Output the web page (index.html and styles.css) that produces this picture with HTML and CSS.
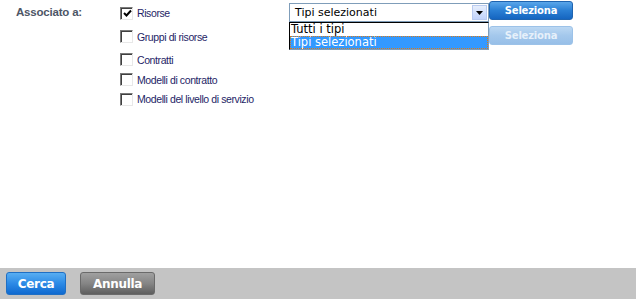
FILE: index.html
```html
<!DOCTYPE html>
<html lang="it">
  <head>
    <meta charset="UTF-8" />
    <meta name="viewport" content="width=device-width, initial-scale=1.0" />
    <title>Ricerca</title>
    <link rel="stylesheet" href="styles.css">
  </head>
  <body>
    <div class="page">
      <div class="form-row">
        <div class="field-label">Associato a:</div>

        <div class="check-list">
          <label class="check-item row-1">
            <span class="check checked">
              <svg width="9" height="9" viewBox="0 0 9 9"><path d="M1 4 L3.5 6.5 L8 1.5" fill="none" stroke="#000" stroke-width="2"/></svg>
            </span>
            Risorse
          </label>
          <label class="check-item row-2"><span class="check"></span>Gruppi di risorse</label>
          <label class="check-item row-3"><span class="check"></span>Contratti</label>
          <label class="check-item row-4"><span class="check"></span>Modelli di contratto</label>
          <label class="check-item row-5"><span class="check"></span>Modelli del livello di servizio</label>
        </div>

        <div class="picker">
          <div class="select-box">
            <span class="select-value">Tipi selezionati</span>
            <span class="select-arrow">
              <svg width="7" height="4" viewBox="0 0 7 4"><path d="M0 0 H7 L3.5 4 Z" fill="#000"/></svg>
            </span>
          </div>
          <ul class="select-list">
            <li>Tutti i tipi</li>
            <li class="selected">Tipi selezionati</li>
          </ul>
        </div>

        <div class="actions">
          <button class="btn-small">Seleziona</button>
          <button class="btn-small" disabled>Seleziona</button>
        </div>
      </div>
    </div>

    <div class="footer">
      <button class="btn btn-primary">Cerca</button>
      <button class="btn btn-grey">Annulla</button>
    </div>
  </body>
</html>
```

FILE: styles.css
```css
body {
  margin: 0;
  padding: 0;
  background-color: white;
  font-family: "Liberation Sans", Arial, sans-serif;
  font-size: 11px;
}
.page {
  height: 268px;
}
.form-row {
  display: flex;
}
.field-label {
  width: 104px;
  padding-left: 16px;
  padding-top: 6px;
  font-weight: bold;
  font-size: 11.5px;
  letter-spacing: -0.2px;
  color: #4d5666;
}
.check-list {
  width: 169px;
  display: flex;
  flex-direction: column;
}
.check-item {
  display: flex;
  align-items: center;
  gap: 3px;
  color: #1e1e66;
  font-size: 10.5px;
  letter-spacing: -0.4px;
  white-space: nowrap;
}
.row-1 {
  height: 24px;
  padding-top: 1px;
}
.row-2 {
  height: 23px;
}
.row-3 {
  height: 21px;
  padding-top: 1px;
}
.row-4 {
  height: 19px;
}
.row-5 {
  height: 20px;
}
.check {
  width: 11px;
  height: 11px;
  margin-right: 1px;
  background-color: white;
  border: 1px solid;
  border-color: #7a7a7a #e8e8e8 #e8e8e8 #7a7a7a;
  box-shadow: inset 1px 1px 0 #404040;
  display: flex;
  align-items: center;
  justify-content: center;
}
.check svg {
  margin: 1px 0 0 1px;
}
.picker {
  position: relative;
  width: 200px;
  padding-top: 3px;
  font-family: "DejaVu Sans", Verdana, sans-serif;
}
.select-box {
  height: 17px;
  border: 1px solid #7f9db9;
  display: flex;
  align-items: center;
  background-color: white;
}
.select-value {
  flex: 1;
  padding-left: 5px;
  font-size: 11px;
  color: #000;
}
.select-arrow {
  width: 15px;
  height: 15px;
  margin-right: 1px;
  background: linear-gradient(#e6eefc, #c1d3fb);
  border: 1px solid #b9cbf0;
  box-sizing: border-box;
  display: flex;
  align-items: center;
  justify-content: center;
}
.select-list {
  position: absolute;
  top: 22px;
  left: 0;
  width: 200px;
  margin: 0;
  padding: 0;
  list-style: none;
  background-color: white;
  border: 1px solid #000;
  border-right-color: #7f9db9;
  border-bottom-color: #7f9db9;
  box-sizing: border-box;
  font-size: 11.5px;
}
.select-list li {
  height: 13px;
  line-height: 13px;
  padding-left: 1px;
}
.select-list .selected {
  background-color: #3399ff;
  color: white;
  outline: 1px dotted #d97a1a;
  outline-offset: -1px;
}
.actions {
  display: flex;
  flex-direction: column;
  gap: 6px;
  padding-top: 1px;
}
.btn-small {
  width: 84px;
  height: 19px;
  padding: 0;
  border: 1px solid #1f64b0;
  border-radius: 3px;
  background: linear-gradient(#5aa6ea, #2a7fd4 50%, #1565c0);
  color: white;
  font-weight: bold;
  font-size: 10px;
  font-family: "DejaVu Sans", Verdana, sans-serif;
  letter-spacing: -0.2px;
  cursor: pointer;
}
.btn-small:disabled {
  border-color: #9cc2e8;
  background: linear-gradient(#bcd8f3, #a4c8ec 50%, #97bfe8);
  color: #e6f0fa;
  cursor: default;
}
.footer {
  height: 31px;
  background-color: #c4c4c4;
  display: flex;
  align-items: center;
  gap: 14px;
  padding-left: 6px;
}
.btn {
  height: 23px;
  padding: 0;
  border-radius: 3px;
  font-weight: bold;
  font-size: 12px;
  font-family: "DejaVu Sans", Verdana, sans-serif;
  letter-spacing: -0.3px;
  color: white;
  cursor: pointer;
}
.btn-primary {
  width: 60px;
  border: 1px solid #1f6fc4;
  background: linear-gradient(#58aef2, #2c8ae6 50%, #0f6ad0);
}
.btn-grey {
  width: 75px;
  border: 1px solid #6a6a6a;
  background: linear-gradient(#a0a0a0, #858585 50%, #5e5e5e);
}
```
